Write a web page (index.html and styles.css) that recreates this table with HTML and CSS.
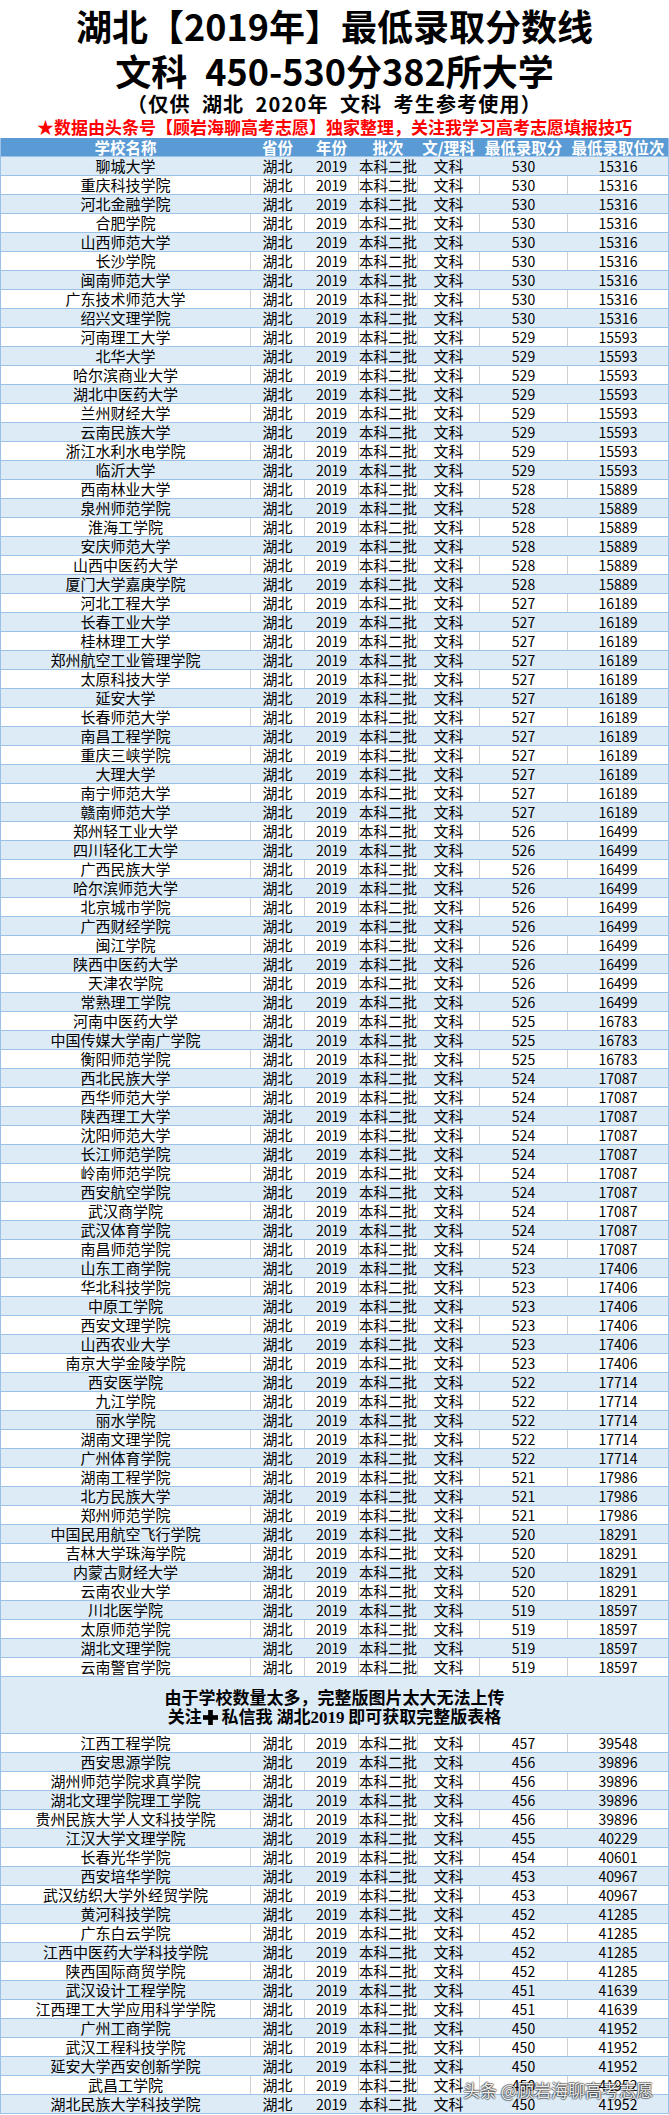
FILE: index.html
```html
<!DOCTYPE html>
<html lang="zh-CN">
<head>
<meta charset="utf-8">
<title>湖北【2019年】最低录取分数线 文科 450-530分</title>
<link rel="stylesheet" href="styles.css">
</head>
<body>
<div class="page">
  <div class="title">
    <div class="t1">湖北【2019年】最低录取分数线</div>
    <div class="t2">文科&ensp;450-530分382所大学</div>
    <div class="t3">（仅供&ensp;湖北&ensp;2020年&ensp;文科&ensp;考生参考使用）</div>
    <div class="t4">★数据由头条号【顾岩海聊高考志愿】独家整理，关注我学习高考志愿填报技巧</div>
  </div>
  <div class="table">
    <div class="row head"><span>学校名称</span><span>省份</span><span>年份</span><span>批次</span><span>文/理科</span><span>最低录取分</span><span>最低录取位次</span></div>
    <div class="sec sec-a">
      <div class="row"><span>聊城大学</span><span>湖北</span><span>2019</span><span>本科二批</span><span>文科</span><span>530</span><span>15316</span></div>
      <div class="row"><span>重庆科技学院</span><span>湖北</span><span>2019</span><span>本科二批</span><span>文科</span><span>530</span><span>15316</span></div>
      <div class="row"><span>河北金融学院</span><span>湖北</span><span>2019</span><span>本科二批</span><span>文科</span><span>530</span><span>15316</span></div>
      <div class="row"><span>合肥学院</span><span>湖北</span><span>2019</span><span>本科二批</span><span>文科</span><span>530</span><span>15316</span></div>
      <div class="row"><span>山西师范大学</span><span>湖北</span><span>2019</span><span>本科二批</span><span>文科</span><span>530</span><span>15316</span></div>
      <div class="row"><span>长沙学院</span><span>湖北</span><span>2019</span><span>本科二批</span><span>文科</span><span>530</span><span>15316</span></div>
      <div class="row"><span>闽南师范大学</span><span>湖北</span><span>2019</span><span>本科二批</span><span>文科</span><span>530</span><span>15316</span></div>
      <div class="row"><span>广东技术师范大学</span><span>湖北</span><span>2019</span><span>本科二批</span><span>文科</span><span>530</span><span>15316</span></div>
      <div class="row"><span>绍兴文理学院</span><span>湖北</span><span>2019</span><span>本科二批</span><span>文科</span><span>530</span><span>15316</span></div>
      <div class="row"><span>河南理工大学</span><span>湖北</span><span>2019</span><span>本科二批</span><span>文科</span><span>529</span><span>15593</span></div>
      <div class="row"><span>北华大学</span><span>湖北</span><span>2019</span><span>本科二批</span><span>文科</span><span>529</span><span>15593</span></div>
      <div class="row"><span>哈尔滨商业大学</span><span>湖北</span><span>2019</span><span>本科二批</span><span>文科</span><span>529</span><span>15593</span></div>
      <div class="row"><span>湖北中医药大学</span><span>湖北</span><span>2019</span><span>本科二批</span><span>文科</span><span>529</span><span>15593</span></div>
      <div class="row"><span>兰州财经大学</span><span>湖北</span><span>2019</span><span>本科二批</span><span>文科</span><span>529</span><span>15593</span></div>
      <div class="row"><span>云南民族大学</span><span>湖北</span><span>2019</span><span>本科二批</span><span>文科</span><span>529</span><span>15593</span></div>
      <div class="row"><span>浙江水利水电学院</span><span>湖北</span><span>2019</span><span>本科二批</span><span>文科</span><span>529</span><span>15593</span></div>
      <div class="row"><span>临沂大学</span><span>湖北</span><span>2019</span><span>本科二批</span><span>文科</span><span>529</span><span>15593</span></div>
      <div class="row"><span>西南林业大学</span><span>湖北</span><span>2019</span><span>本科二批</span><span>文科</span><span>528</span><span>15889</span></div>
      <div class="row"><span>泉州师范学院</span><span>湖北</span><span>2019</span><span>本科二批</span><span>文科</span><span>528</span><span>15889</span></div>
      <div class="row"><span>淮海工学院</span><span>湖北</span><span>2019</span><span>本科二批</span><span>文科</span><span>528</span><span>15889</span></div>
      <div class="row"><span>安庆师范大学</span><span>湖北</span><span>2019</span><span>本科二批</span><span>文科</span><span>528</span><span>15889</span></div>
      <div class="row"><span>山西中医药大学</span><span>湖北</span><span>2019</span><span>本科二批</span><span>文科</span><span>528</span><span>15889</span></div>
      <div class="row"><span>厦门大学嘉庚学院</span><span>湖北</span><span>2019</span><span>本科二批</span><span>文科</span><span>528</span><span>15889</span></div>
      <div class="row"><span>河北工程大学</span><span>湖北</span><span>2019</span><span>本科二批</span><span>文科</span><span>527</span><span>16189</span></div>
      <div class="row"><span>长春工业大学</span><span>湖北</span><span>2019</span><span>本科二批</span><span>文科</span><span>527</span><span>16189</span></div>
      <div class="row"><span>桂林理工大学</span><span>湖北</span><span>2019</span><span>本科二批</span><span>文科</span><span>527</span><span>16189</span></div>
      <div class="row"><span>郑州航空工业管理学院</span><span>湖北</span><span>2019</span><span>本科二批</span><span>文科</span><span>527</span><span>16189</span></div>
      <div class="row"><span>太原科技大学</span><span>湖北</span><span>2019</span><span>本科二批</span><span>文科</span><span>527</span><span>16189</span></div>
      <div class="row"><span>延安大学</span><span>湖北</span><span>2019</span><span>本科二批</span><span>文科</span><span>527</span><span>16189</span></div>
      <div class="row"><span>长春师范大学</span><span>湖北</span><span>2019</span><span>本科二批</span><span>文科</span><span>527</span><span>16189</span></div>
      <div class="row"><span>南昌工程学院</span><span>湖北</span><span>2019</span><span>本科二批</span><span>文科</span><span>527</span><span>16189</span></div>
      <div class="row"><span>重庆三峡学院</span><span>湖北</span><span>2019</span><span>本科二批</span><span>文科</span><span>527</span><span>16189</span></div>
      <div class="row"><span>大理大学</span><span>湖北</span><span>2019</span><span>本科二批</span><span>文科</span><span>527</span><span>16189</span></div>
      <div class="row"><span>南宁师范大学</span><span>湖北</span><span>2019</span><span>本科二批</span><span>文科</span><span>527</span><span>16189</span></div>
      <div class="row"><span>赣南师范大学</span><span>湖北</span><span>2019</span><span>本科二批</span><span>文科</span><span>527</span><span>16189</span></div>
      <div class="row"><span>郑州轻工业大学</span><span>湖北</span><span>2019</span><span>本科二批</span><span>文科</span><span>526</span><span>16499</span></div>
      <div class="row"><span>四川轻化工大学</span><span>湖北</span><span>2019</span><span>本科二批</span><span>文科</span><span>526</span><span>16499</span></div>
      <div class="row"><span>广西民族大学</span><span>湖北</span><span>2019</span><span>本科二批</span><span>文科</span><span>526</span><span>16499</span></div>
      <div class="row"><span>哈尔滨师范大学</span><span>湖北</span><span>2019</span><span>本科二批</span><span>文科</span><span>526</span><span>16499</span></div>
      <div class="row"><span>北京城市学院</span><span>湖北</span><span>2019</span><span>本科二批</span><span>文科</span><span>526</span><span>16499</span></div>
      <div class="row"><span>广西财经学院</span><span>湖北</span><span>2019</span><span>本科二批</span><span>文科</span><span>526</span><span>16499</span></div>
      <div class="row"><span>闽江学院</span><span>湖北</span><span>2019</span><span>本科二批</span><span>文科</span><span>526</span><span>16499</span></div>
      <div class="row"><span>陕西中医药大学</span><span>湖北</span><span>2019</span><span>本科二批</span><span>文科</span><span>526</span><span>16499</span></div>
      <div class="row"><span>天津农学院</span><span>湖北</span><span>2019</span><span>本科二批</span><span>文科</span><span>526</span><span>16499</span></div>
      <div class="row"><span>常熟理工学院</span><span>湖北</span><span>2019</span><span>本科二批</span><span>文科</span><span>526</span><span>16499</span></div>
      <div class="row"><span>河南中医药大学</span><span>湖北</span><span>2019</span><span>本科二批</span><span>文科</span><span>525</span><span>16783</span></div>
      <div class="row"><span>中国传媒大学南广学院</span><span>湖北</span><span>2019</span><span>本科二批</span><span>文科</span><span>525</span><span>16783</span></div>
      <div class="row"><span>衡阳师范学院</span><span>湖北</span><span>2019</span><span>本科二批</span><span>文科</span><span>525</span><span>16783</span></div>
      <div class="row"><span>西北民族大学</span><span>湖北</span><span>2019</span><span>本科二批</span><span>文科</span><span>524</span><span>17087</span></div>
      <div class="row"><span>西华师范大学</span><span>湖北</span><span>2019</span><span>本科二批</span><span>文科</span><span>524</span><span>17087</span></div>
      <div class="row"><span>陕西理工大学</span><span>湖北</span><span>2019</span><span>本科二批</span><span>文科</span><span>524</span><span>17087</span></div>
      <div class="row"><span>沈阳师范大学</span><span>湖北</span><span>2019</span><span>本科二批</span><span>文科</span><span>524</span><span>17087</span></div>
      <div class="row"><span>长江师范学院</span><span>湖北</span><span>2019</span><span>本科二批</span><span>文科</span><span>524</span><span>17087</span></div>
      <div class="row"><span>岭南师范学院</span><span>湖北</span><span>2019</span><span>本科二批</span><span>文科</span><span>524</span><span>17087</span></div>
      <div class="row"><span>西安航空学院</span><span>湖北</span><span>2019</span><span>本科二批</span><span>文科</span><span>524</span><span>17087</span></div>
      <div class="row"><span>武汉商学院</span><span>湖北</span><span>2019</span><span>本科二批</span><span>文科</span><span>524</span><span>17087</span></div>
      <div class="row"><span>武汉体育学院</span><span>湖北</span><span>2019</span><span>本科二批</span><span>文科</span><span>524</span><span>17087</span></div>
      <div class="row"><span>南昌师范学院</span><span>湖北</span><span>2019</span><span>本科二批</span><span>文科</span><span>524</span><span>17087</span></div>
      <div class="row"><span>山东工商学院</span><span>湖北</span><span>2019</span><span>本科二批</span><span>文科</span><span>523</span><span>17406</span></div>
      <div class="row"><span>华北科技学院</span><span>湖北</span><span>2019</span><span>本科二批</span><span>文科</span><span>523</span><span>17406</span></div>
      <div class="row"><span>中原工学院</span><span>湖北</span><span>2019</span><span>本科二批</span><span>文科</span><span>523</span><span>17406</span></div>
      <div class="row"><span>西安文理学院</span><span>湖北</span><span>2019</span><span>本科二批</span><span>文科</span><span>523</span><span>17406</span></div>
      <div class="row"><span>山西农业大学</span><span>湖北</span><span>2019</span><span>本科二批</span><span>文科</span><span>523</span><span>17406</span></div>
      <div class="row"><span>南京大学金陵学院</span><span>湖北</span><span>2019</span><span>本科二批</span><span>文科</span><span>523</span><span>17406</span></div>
      <div class="row"><span>西安医学院</span><span>湖北</span><span>2019</span><span>本科二批</span><span>文科</span><span>522</span><span>17714</span></div>
      <div class="row"><span>九江学院</span><span>湖北</span><span>2019</span><span>本科二批</span><span>文科</span><span>522</span><span>17714</span></div>
      <div class="row"><span>丽水学院</span><span>湖北</span><span>2019</span><span>本科二批</span><span>文科</span><span>522</span><span>17714</span></div>
      <div class="row"><span>湖南文理学院</span><span>湖北</span><span>2019</span><span>本科二批</span><span>文科</span><span>522</span><span>17714</span></div>
      <div class="row"><span>广州体育学院</span><span>湖北</span><span>2019</span><span>本科二批</span><span>文科</span><span>522</span><span>17714</span></div>
      <div class="row"><span>湖南工程学院</span><span>湖北</span><span>2019</span><span>本科二批</span><span>文科</span><span>521</span><span>17986</span></div>
      <div class="row"><span>北方民族大学</span><span>湖北</span><span>2019</span><span>本科二批</span><span>文科</span><span>521</span><span>17986</span></div>
      <div class="row"><span>郑州师范学院</span><span>湖北</span><span>2019</span><span>本科二批</span><span>文科</span><span>521</span><span>17986</span></div>
      <div class="row"><span>中国民用航空飞行学院</span><span>湖北</span><span>2019</span><span>本科二批</span><span>文科</span><span>520</span><span>18291</span></div>
      <div class="row"><span>吉林大学珠海学院</span><span>湖北</span><span>2019</span><span>本科二批</span><span>文科</span><span>520</span><span>18291</span></div>
      <div class="row"><span>内蒙古财经大学</span><span>湖北</span><span>2019</span><span>本科二批</span><span>文科</span><span>520</span><span>18291</span></div>
      <div class="row"><span>云南农业大学</span><span>湖北</span><span>2019</span><span>本科二批</span><span>文科</span><span>520</span><span>18291</span></div>
      <div class="row"><span>川北医学院</span><span>湖北</span><span>2019</span><span>本科二批</span><span>文科</span><span>519</span><span>18597</span></div>
      <div class="row"><span>太原师范学院</span><span>湖北</span><span>2019</span><span>本科二批</span><span>文科</span><span>519</span><span>18597</span></div>
      <div class="row"><span>湖北文理学院</span><span>湖北</span><span>2019</span><span>本科二批</span><span>文科</span><span>519</span><span>18597</span></div>
      <div class="row"><span>云南警官学院</span><span>湖北</span><span>2019</span><span>本科二批</span><span>文科</span><span>519</span><span>18597</span></div>
    </div>
    <div class="notice">
      <div class="notice-line">由于学校数量太多，完整版图片太大无法上传</div>
      <div class="notice-line">关注<svg class="plus" viewBox="0 0 16 16" width="16" height="16" aria-hidden="true"><rect x="5.5" y="0" width="5" height="16" fill="#000"/><rect x="0" y="5.5" width="16" height="5" fill="#000"/></svg> 私信我 湖北<span class="serif">2019</span> 即可获取完整版表格</div>
    </div>
    <div class="sec sec-b">
      <div class="row"><span>江西工程学院</span><span>湖北</span><span>2019</span><span>本科二批</span><span>文科</span><span>457</span><span>39548</span></div>
      <div class="row"><span>西安思源学院</span><span>湖北</span><span>2019</span><span>本科二批</span><span>文科</span><span>456</span><span>39896</span></div>
      <div class="row"><span>湖州师范学院求真学院</span><span>湖北</span><span>2019</span><span>本科二批</span><span>文科</span><span>456</span><span>39896</span></div>
      <div class="row"><span>湖北文理学院理工学院</span><span>湖北</span><span>2019</span><span>本科二批</span><span>文科</span><span>456</span><span>39896</span></div>
      <div class="row"><span>贵州民族大学人文科技学院</span><span>湖北</span><span>2019</span><span>本科二批</span><span>文科</span><span>456</span><span>39896</span></div>
      <div class="row"><span>江汉大学文理学院</span><span>湖北</span><span>2019</span><span>本科二批</span><span>文科</span><span>455</span><span>40229</span></div>
      <div class="row"><span>长春光华学院</span><span>湖北</span><span>2019</span><span>本科二批</span><span>文科</span><span>454</span><span>40601</span></div>
      <div class="row"><span>西安培华学院</span><span>湖北</span><span>2019</span><span>本科二批</span><span>文科</span><span>453</span><span>40967</span></div>
      <div class="row"><span>武汉纺织大学外经贸学院</span><span>湖北</span><span>2019</span><span>本科二批</span><span>文科</span><span>453</span><span>40967</span></div>
      <div class="row"><span>黄河科技学院</span><span>湖北</span><span>2019</span><span>本科二批</span><span>文科</span><span>452</span><span>41285</span></div>
      <div class="row"><span>广东白云学院</span><span>湖北</span><span>2019</span><span>本科二批</span><span>文科</span><span>452</span><span>41285</span></div>
      <div class="row"><span>江西中医药大学科技学院</span><span>湖北</span><span>2019</span><span>本科二批</span><span>文科</span><span>452</span><span>41285</span></div>
      <div class="row"><span>陕西国际商贸学院</span><span>湖北</span><span>2019</span><span>本科二批</span><span>文科</span><span>452</span><span>41285</span></div>
      <div class="row"><span>武汉设计工程学院</span><span>湖北</span><span>2019</span><span>本科二批</span><span>文科</span><span>451</span><span>41639</span></div>
      <div class="row"><span>江西理工大学应用科学学院</span><span>湖北</span><span>2019</span><span>本科二批</span><span>文科</span><span>451</span><span>41639</span></div>
      <div class="row"><span>广州工商学院</span><span>湖北</span><span>2019</span><span>本科二批</span><span>文科</span><span>450</span><span>41952</span></div>
      <div class="row"><span>武汉工程科技学院</span><span>湖北</span><span>2019</span><span>本科二批</span><span>文科</span><span>450</span><span>41952</span></div>
      <div class="row"><span>延安大学西安创新学院</span><span>湖北</span><span>2019</span><span>本科二批</span><span>文科</span><span>450</span><span>41952</span></div>
      <div class="row"><span>武昌工学院</span><span>湖北</span><span>2019</span><span>本科二批</span><span>文科</span><span>450</span><span>41952</span></div>
      <div class="row"><span>湖北民族大学科技学院</span><span>湖北</span><span>2019</span><span>本科二批</span><span>文科</span><span>450</span><span>41952</span></div>
    </div>
  </div>
  <div class="watermark">头条 @顾岩海聊高考志愿</div>
</div>
</body>
</html>
```

FILE: styles.css
```css
html, body {
  margin: 0;
  padding: 0;
  background: #ffffff;
}

body {
  width: 669px;
  font-family: "Noto Sans CJK SC", "Noto Sans", sans-serif;
  color: #000000;
}

.page {
  position: relative;
  width: 669px;
}

/* ---------- title block ---------- */
.title {
  box-sizing: border-box;
  height: 138px;
  padding-top: 3px;
  text-align: center;
  font-weight: 700;
  white-space: nowrap;
}

.t1,
.t2 {
  font-size: 36px;
  line-height: 45px;
}

.t3 {
  font-size: 20px;
  line-height: 22px;
  letter-spacing: 1.2px;
}

.t4 {
  font-size: 17px;
  line-height: 23px;
  color: #ff0000;
}

/* ---------- table ---------- */
.table {
  border-left: 1px solid #9bc2e6;
  border-right: 1px solid #9bc2e6;
}

.row {
  display: grid;
  grid-template-columns: 249px 54px 54px 59px 62px 88px 101px;
  box-sizing: border-box;
  height: 19px;
  border-bottom: 1px solid #9bc2e6;
  background: #ffffff;
}

.row > span {
  display: block;
  box-sizing: border-box;
  border-left: 1px solid #d0d0d0;
  font-size: 15px;
  line-height: 18px;
  text-align: center;
  white-space: nowrap;
}

.row > span:first-child {
  border-left: none;
}

.sec .row > span:nth-child(3),
.sec .row > span:nth-child(6),
.sec .row > span:nth-child(7) {
  font-size: 14px;
}

.sec .row > span:nth-child(4) {
  font-size: 14.5px;
}

.head {
  background: #5b9bd5;
  color: #ffffff;
  font-weight: 700;
}

.head > span {
  border-left-color: transparent;
  font-size: 15.5px;
}

.sec-a .row:nth-child(odd),
.sec-b .row:nth-child(even) {
  background: #ddebf7;
}

.sec-a .row:nth-child(odd) > span,
.sec-b .row:nth-child(even) > span {
  border-left-color: transparent;
}

/* ---------- notice ---------- */
.notice {
  box-sizing: border-box;
  height: 57px;
  padding-top: 10px;
  background: #ddebf7;
  border-bottom: 1px solid #9bc2e6;
  text-align: center;
  font-size: 17px;
  font-weight: 700;
  line-height: 19px;
  white-space: nowrap;
}

.plus {
  display: inline-block;
  width: 15px;
  height: 15px;
  vertical-align: -2px;
  margin-left: 1px;
}

.serif {
  font-family: "Liberation Serif", serif;
  font-size: 17px;
}

/* ---------- watermark ---------- */
.watermark {
  position: absolute;
  left: 463px;
  top: 2079px;
  font-size: 17px;
  line-height: 22px;
  color: rgba(255, 255, 255, 0.92);
  white-space: nowrap;
  text-shadow:
    1px 0 1px rgba(0, 0, 0, 0.45),
    -1px 0 1px rgba(0, 0, 0, 0.45),
    0 1px 1px rgba(0, 0, 0, 0.45),
    0 -1px 1px rgba(0, 0, 0, 0.45);
}
```
